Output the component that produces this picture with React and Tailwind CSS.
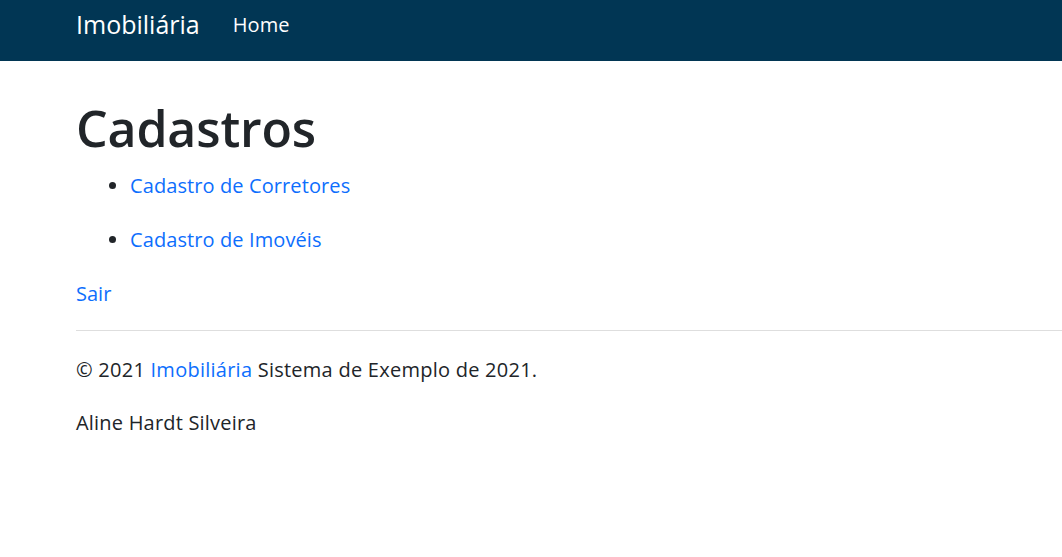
export default function App() {
  const font = { fontFamily: '"Segoe UI", "Open Sans", "Noto Sans", sans-serif' };
  return (
    <div className="min-h-[557px] bg-white text-[#212529]" style={font}>
      <nav className="h-[61px] bg-[#013654] flex items-center pl-[76px]">
        <span className="text-white text-[25px] leading-[30px] -mt-[13px]">Imobiliária</span>
        <span className="text-white text-[20px] leading-[30px] ml-[33px] -mt-[12px] tracking-[0.1px]">Home</span>
      </nav>
      <main className="pl-[76px]">
        <h1 className="text-[50px] leading-[60px] font-semibold mt-[37px] tracking-[-0.15px]">Cadastros</h1>
        <ul className="list-disc pl-[54px] mt-[13px] text-[20px] leading-[30px] flex flex-col gap-[24px] tracking-[0.1px]">
          <li><a className="text-[#0d6efd]">Cadastro de Corretores</a></li>
          <li><a className="text-[#0d6efd]">Cadastro de Imovéis</a></li>
        </ul>
        <p className="mt-[24px] text-[20px] leading-[30px]"><a className="text-[#0d6efd]">Sair</a></p>
        <hr className="mt-[21px] border-t border-[#dedede]" />
        <p className="mt-[24px] text-[20px] leading-[30px] tracking-[0.25px]">© 2021 <a className="text-[#0d6efd]">Imobiliária</a> Sistema de Exemplo de 2021.</p>
        <p className="mt-[23px] text-[20px] leading-[30px] tracking-[0.2px]">Aline Hardt Silveira</p>
      </main>
    </div>
  );
}
